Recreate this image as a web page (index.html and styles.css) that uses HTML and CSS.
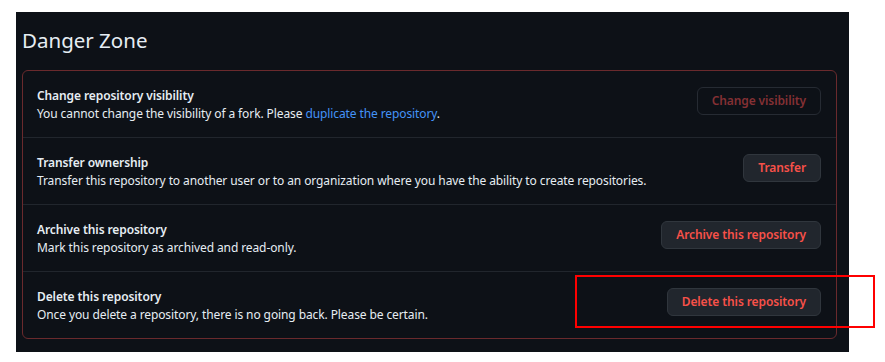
FILE: index.html
```html
<!DOCTYPE html>
<html lang="en">
<head>
  <meta charset="UTF-8">
  <title>Danger Zone</title>
  <link rel="stylesheet" href="styles.css">
</head>
<body>
  <div class="page">
    <div class="panel">
      <h2 class="title">Danger Zone</h2>
      <div class="danger-box">
        <div class="row">
          <div class="info">
            <strong>Change repository visibility</strong>
            <p>You cannot change the visibility of a fork. Please <a href="#">duplicate the repository</a>.</p>
          </div>
          <button class="btn" disabled>Change visibility</button>
        </div>
        <div class="row">
          <div class="info">
            <strong>Transfer ownership</strong>
            <p>Transfer this repository to another user or to an organization where you have the ability to create repositories.</p>
          </div>
          <button class="btn">Transfer</button>
        </div>
        <div class="row">
          <div class="info">
            <strong>Archive this repository</strong>
            <p>Mark this repository as archived and read-only.</p>
          </div>
          <button class="btn">Archive this repository</button>
        </div>
        <div class="row">
          <div class="info">
            <strong>Delete this repository</strong>
            <p>Once you delete a repository, there is no going back. Please be certain.</p>
          </div>
          <button class="btn">Delete this repository</button>
        </div>
      </div>
    </div>
    <!-- highlight box drawn on top of the screenshot -->
    <div class="highlight"></div>
  </div>
</body>
</html>
```

FILE: styles.css
```css
body {
  margin: 0;
  background-color: #fff;
  font-family: "Noto Sans", "Open Sans", sans-serif;
}
.page {
  position: relative;
  padding: 12px 0 11px 16px;
}
.panel {
  width: 815px;
  padding: 0 12px 13px 6px;
  background-color: #0d1117;
  color: #e6edf3;
}
.title {
  margin: 0;
  padding: 15px 0 17px;
  font-size: 20.5px;
  font-weight: 400;
  line-height: 26px;
}
.danger-box {
  border: 1px solid #6a2a2d;
  border-radius: 6px;
}
.row {
  display: flex;
  align-items: center;
  justify-content: space-between;
  height: 66px;
  padding: 0 15px 0 14px;
  border-top: 1px solid #21262d;
}
.row:first-child {
  border-top: none;
}
.info {
  letter-spacing: -0.1px;
}
.info strong {
  display: block;
  font-size: 12px;
  font-weight: 600;
  line-height: 18px;
}
.info p {
  margin: 0;
  font-size: 12px;
  line-height: 17px;
}
.info a {
  color: #4493f8;
  text-decoration: none;
}
.btn {
  height: 28px;
  margin-bottom: 7px;
  padding: 0 14px;
  font-family: inherit;
  font-size: 12px;
  font-weight: 600;
  letter-spacing: -0.1px;
  color: #f85149;
  background-color: #21262d;
  border: 1px solid #30363d;
  border-radius: 6px;
}
.btn:disabled {
  color: #843034;
  background-color: transparent;
  border-color: #262b33;
}
.highlight {
  position: absolute;
  left: 575px;
  top: 275px;
  width: 296px;
  height: 49px;
  border: 2px solid #ff0000;
}
```
